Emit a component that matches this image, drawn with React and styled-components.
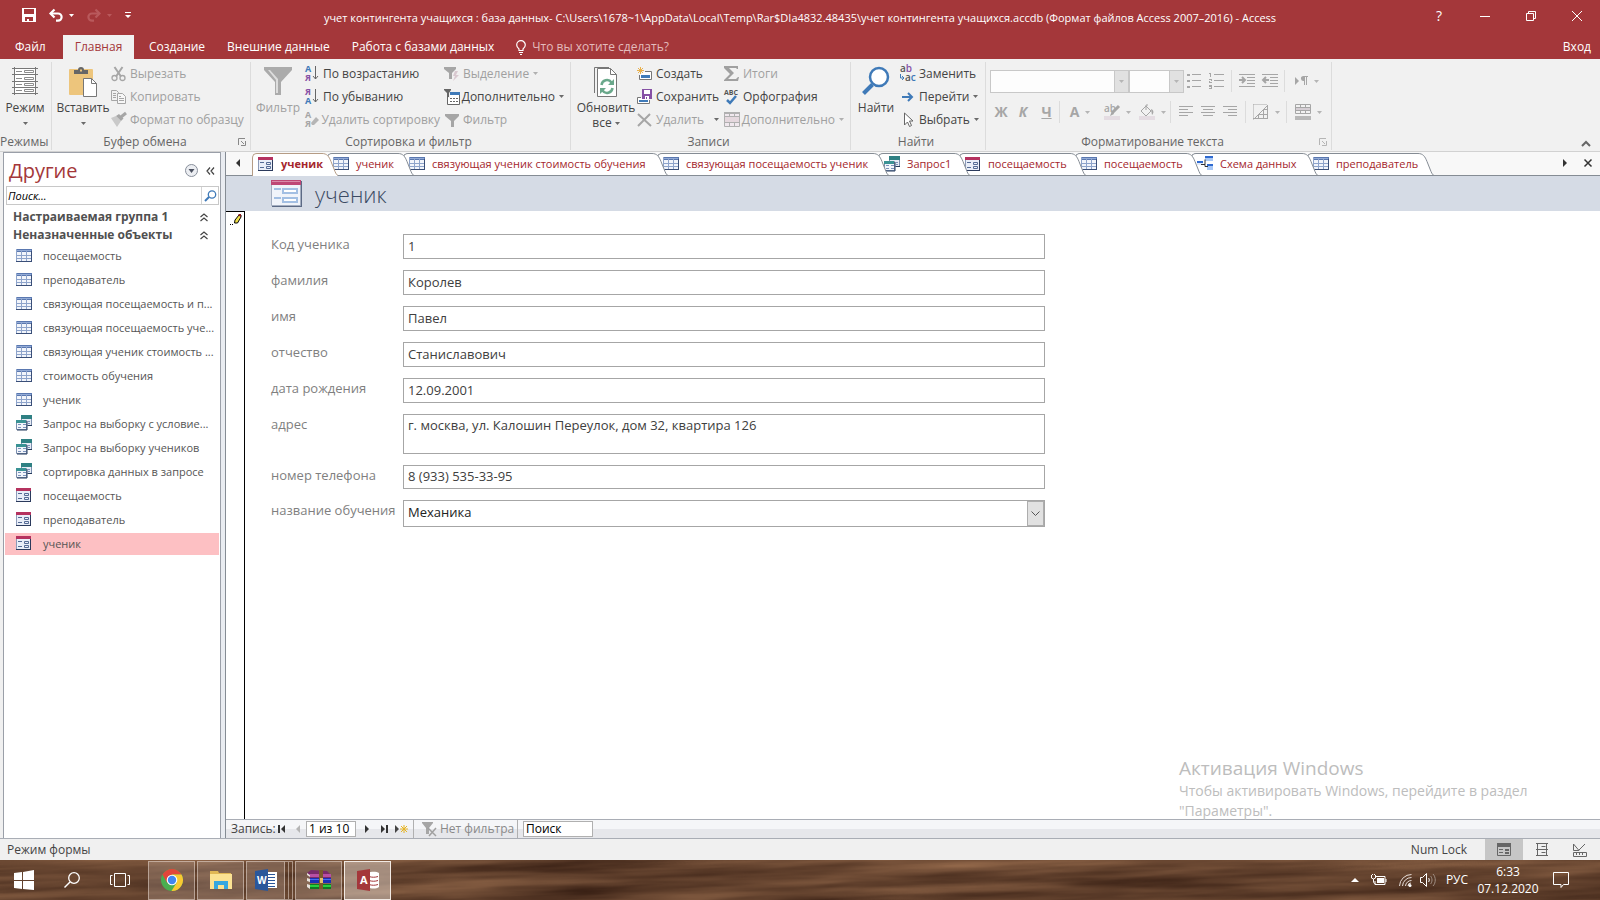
import React from 'react';
import styled, { createGlobalStyle } from 'styled-components';

const GlobalStyle = createGlobalStyle`
  * {
    box-sizing: border-box;
  }
  body {
    margin: 0;
    font-family: "Open Sans", "Noto Sans", sans-serif;
    font-size: 12px;
    line-height: 16px;
    color: #444;
  }
  button, input, select, textarea {
    font: inherit;
    color: inherit;
  }
  button {
    padding: 0;
    border: 0;
    background: none;
    white-space: nowrap;
  }
  svg {
    display: block;
    flex: none;
    overflow: visible;
  }
`

const BLUE = '#3f7ab8';
const PURPLE = '#8650a5';

// ICONS
const Svg = ({ w = 16, h = 16, children, ...rest }) => (
  <svg width={w} height={h} viewBox={`0 0 ${w} ${h}`} fill="none" aria-hidden="true" {...rest}>
    {children}
  </svg>
);

const Caret = ({ color = '#6a6a6a' }) => (
  <Svg w={5} h={3}><path d="M0 0h5L2.5 3z" fill={color} /></Svg>
);

const SaveIcon = () => (
  <Svg w={14} h={14}>
    <path fill="#fff" fillRule="evenodd" d="M0 0h14v14H0zM2 1v5h10V1zM3 9v4h2v-2h2v2h4V9z" />
  </Svg>
);

const UndoIcon = ({ flip, color = '#fff' }) => (
  <Svg w={14} h={13}>
    <g transform={flip ? 'translate(14 0) scale(-1 1)' : undefined}>
      <path d="M1.500 4.500H9a3.600 3.600 0 0 1 0 7.200H7" stroke={color} strokeWidth="2.200" />
      <path d="M5.500 .5 1.500 4.500l4 4" stroke={color} strokeWidth="2.200" />
    </g>
  </Svg>
);

const CustomizeIcon = () => (
  <Svg w={6} h={7}><path d="M0 0h6v1H0zM0 3h6L3 6z" fill="#fff" /></Svg>
);

const BulbIcon = () => (
  <Svg w={10} h={15}>
    <path d="M3 10.500V9C1.500 7.800.7 6.500.7 5a4.300 4.300 0 0 1 8.600 0c0 1.500-.8 2.800-2.300 4v1.500z" stroke="#fff" strokeWidth="1.200" />
    <path d="M3 12h4v1H3zM4 14h2v1H4z" fill="#fff" />
  </Svg>
);

const ViewIcon = () => (
  <Svg w={26} h={28}>
    <path fill="#fff" d="M2 1h22v26H2z" />
    <path stroke="#777" d="M2.500 0v28M23.500 0v28M0 1.500h26M0 7.500h26M0 14.500h26M0 20.500h26M0 26.500h26" />
    <path stroke="#8c8c8c" d="M12.500 3.500h9v2h-9zM12.500 10.500h9v2h-9zM12.500 16.500h9v2h-9zM12.500 22.500h9v2h-9zM4 4.500h6M4 11.500h6M4 17.500h6M4 23.500h6" />
  </Svg>
);

const PasteIcon = () => (
  <Svg w={28} h={30}>
    <rect y="2" width="24" height="26" rx="1" fill="#edc57c" />
    <path fill="#666" d="M5 7V3h4a3 3 0 0 1 6 0h4v4zm6-4.500v2h2v-2z" fillRule="evenodd" />
    <path d="M14.500 11.500h8l5 5v13h-13z" fill="#fff" stroke="#777" />
    <path d="M22.500 11.500v5h5" stroke="#777" />
  </Svg>
);

const CutIcon = () => (
  <Svg>
    <path d="m3.500 1 6.500 9.500M11.500 1 5 10.500" stroke="#a6a6a6" strokeWidth="2" />
    <circle cx="3.500" cy="12" r="2.500" stroke="#a6a6a6" strokeWidth="1.300" />
    <circle cx="11.500" cy="12" r="2.500" stroke="#a6a6a6" strokeWidth="1.300" />
  </Svg>
);

const CopyIcon = () => (
  <Svg>
    <path d="M7 11.500H.5v-10h5l2 2v1" stroke="#a6a6a6" />
    <path d="M6.500 4.500h5l3 3v7h-8z" fill="#f7f7f7" stroke="#a6a6a6" />
    <path d="M2 4.500h3M2 6.500h3M2 8.500h3M8 9.500h5M8 11.500h5M8 7.500h2" stroke="#a6a6a6" />
  </Svg>
);

const BrushIcon = () => (
  <Svg>
    <path d="m0 6 5-2 5 5-4 6z" fill="#c9c9c9" />
    <path d="m5 4 3-2 4.500 4.500L10 9z" fill="#a6a6a6" />
    <path d="M10 5 15 1" stroke="#a6a6a6" strokeWidth="3" />
  </Svg>
);

const LargeFunnel = () => (
  <Svg w={28} h={28}>
    <path fill="#ababab" d="M0 0h28v3L17 15v13h-6V15L0 3z" />
    <path fill="#ddd" d="M4 3h2l8 9v14h-2V13z" />
  </Svg>
);

const SortIcon = ({ top, bottom, topColor, bottomColor, children }) => (
  <Svg w={15} h={17}>
    <text x="1" y="7" fontSize="9" fontWeight="700" fill={topColor}>{top}</text>
    <text x="1" y="16" fontSize="9" fontWeight="700" fill={bottomColor}>{bottom}</text>
    {children || <path d="M11.500 1v13M9 11l2.500 3 2.500-3" stroke="#666" />}
  </Svg>
);

const Eraser = () => <path d="m7 12 5-6 3 3-5 5H8z" fill="#b5b5b5" />;

const FunnelBolt = () => (
  <Svg>
    <path fill="#a6a6a6" d="M0 1h12v2L8 7v6H5V7L0 3z" />
    <path fill="#d9c9d0" d="m11 5 3 0-2 4h3l-6 6 2-5H9z" />
  </Svg>
);

const FunnelTable = () => (
  <Svg>
    <path fill="#666" d="M0 0h7v1L5 4v4H3V4L0 1z" />
    <path d="M3.500 6.500v9h12v-12H8" stroke="#666" fill="none" />
    <path fill="#fff" d="M6 6h9v9H4V9h2z" />
    <path fill={BLUE} d="M6 3h10v3H6z" />
    <path stroke="#666" strokeDasharray="2 1" d="M6 9.500h8M6 12.500h8" />
  </Svg>
);

const Funnel = () => (
  <Svg><path fill="#a6a6a6" d="M1 2h14v2l-5 5v6H7V9L1 4z" /></Svg>
);

const RefreshIcon = () => (
  <Svg w={24} h={30}>
    <path d="M.5 26V.5H15" stroke="#777" />
    <path d="M3.500 1.500h13l6 6v22h-19z" fill="#fff" stroke="#777" />
    <path d="M16.500 1.500v6h6" stroke="#777" />
    <path d="M7.500 18a5.500 5.500 0 0 1 10-2.500M18.500 21a5.500 5.500 0 0 1-10 2.500" stroke="#6aa88b" strokeWidth="2.500" />
    <path d="M20 12v6h-6zM6 27v-6h6z" fill="#6aa88b" />
  </Svg>
);

const NewIcon = () => (
  <Svg w={15} h={14}>
    <path stroke="#e8b04c" d="M3.500 0v7M0 3.500h7M1 1l5 5M6 1 1 6" />
    <path d="M8 4.500h6.500v8H2.500V8" fill="#fff" stroke="#777" />
    <path fill={BLUE} d="M4 8h9v3H4z" />
  </Svg>
);

const SaveRecordIcon = () => (
  <Svg w={15} h={16}>
    <path d="M4 8.500H.5v6h12V11" stroke="#777" fill="#fff" />
    <path fill={BLUE} d="M2 11h9v2H2z" />
    <path fill={PURPLE} d="M5 0h10v10H5z" />
    <path fill="#fff" d="M7 1h6v4H7zM8 7h4v3H8z" />
    <path fill={PURPLE} d="M9 8h1v2H9z" />
  </Svg>
);

const DeleteIcon = () => (
  <Svg w={15} h={14}><path d="m1 1 13 12M13 1 1 13" stroke="#a6a6a6" strokeWidth="2" /></Svg>
);

const SigmaIcon = () => (
  <Svg w={15} h={15}><path fill="#a0a0a0" d="M0 0h14v3h-1l-1-1H5l5 5-6 6h8l2-2h1l-1 4H0v-1l6-6-6-6z" /></Svg>
);

const SpellIcon = () => (
  <Svg>
    <text x="0" y="6" fontSize="7" fontWeight="700" fill="#555">ABC</text>
    <path d="m3 11 3 3 6-7" stroke={BLUE} strokeWidth="2.500" />
  </Svg>
);

const MoreTableIcon = () => (
  <Svg w={16} h={15}>
    <path fill="#f0e8ee" stroke="#b0b0b0" d="M.5.5h15v14H.5zM.5 4.500h15M.5 10.500h15M5.500 0v15M10.500 0v15" />
    <path fill="#b0b0b0" d="M0 0h16v2H0z" />
    <path fill="#e5d8de" d="M1 5h14v5H1z" />
  </Svg>
);

const FindIcon = () => (
  <Svg w={28} h={28}>
    <path d="m1.500 26.500 9-9" stroke={BLUE} strokeWidth="4" />
    <circle cx="17" cy="10" r="9" fill="#fff" stroke={BLUE} strokeWidth="2.500" />
  </Svg>
);

const ReplaceIcon = () => (
  <Svg w={17} h={16}>
    <text x="0" y="6" fontSize="10" fontWeight="600" fill="#555">a<tspan fill={PURPLE}>b</tspan></text>
    <text x="5" y="15" fontSize="10" fontWeight="600" fill="#555">a<tspan fill={BLUE}>c</tspan></text>
    <path d="M.5 8v4H4M2 10l2 2-2 2" stroke={BLUE} />
  </Svg>
);

const GotoIcon = () => (
  <Svg w={16} h={12}><path d="M2 6h10M8 2l4 4-4 4" stroke={BLUE} strokeWidth="2" /></Svg>
);

const CursorIcon = () => (
  <Svg w={16} h={16}><path d="M4.500 1v12l3-3 2 4.500 2-1L9.500 9H13z" fill="#fff" stroke="#666" /></Svg>
);

const GRAY = '#a6a6a6';
const BulletsIcon = () => (
  <Svg><path d="M0 1h3v2H0zM0 7h3v2H0zM0 13h3v2H0zM5 1h9v1H5zM5 7h9v1H5zM5 13h9v1H5z" fill={GRAY} /></Svg>
);
const NumbersIcon = () => (
  <Svg>
    <path d="M0 0h2v4H1V1H0zM0 6h3v2H1v1h2v1H0V8h2V7H0zM0 12h3v4H0v-1h2v-1H0z" fill={GRAY} />
    <path d="M5 1h10v1H5zM5 7h10v1H5zM5 13h10v1H5z" fill={GRAY} />
  </Svg>
);
const IndentIcon = ({ back }) => (
  <Svg>
    <path d="M0 1.500h16M8 4.500h8M8 7.500h8M8 10.500h8M0 13.500h16" stroke={GRAY} />
    <path d={back ? 'M7 7H1m3-3L1 7l3 3' : 'M0 7h6M3 4l3 3-3 3'} stroke={GRAY} strokeWidth="2" />
  </Svg>
);
const ParagraphIcon = () => (
  <Svg w={13} h={10}>
    <path fill={GRAY} d="m0 1 4 4-4 4zM8 0h5v1h-1v8h-1V1h-1v8H9V5a2.500 2.500 0 0 1-1-5z" />
  </Svg>
);
const AlignIcon = ({ d }) => (
  <Svg w={14} h={12}><path d={d} stroke={GRAY} /></Svg>
);
const HighlightIcon = () => (
  <Svg>
    <path fill="#e4dce2" d="M0 12h16v4H0z" />
    <text x="0" y="8" fontSize="10" fontWeight="600" fill={GRAY}>ab</text>
    <path d="M15 2 8 9" stroke={GRAY} strokeWidth="3" />
    <path d="m8 7 2 3-4 2z" fill={GRAY} />
  </Svg>
);
const FillIcon = () => (
  <Svg>
    <path fill="#e4dce2" d="M0 12h16v4H0z" />
    <path d="m2 7 5-5 5 5-5 5zM7 6V1h2" stroke={GRAY} />
    <path d="M12 5c3 1 3 4 1 6z" fill={GRAY} />
  </Svg>
);
const GridlinesIcon = () => (
  <Svg>
    <path d="M.5.500h14M.5.500v15" stroke={GRAY} strokeDasharray="1 1" />
    <path d="M1 15 15 1M0 14.500h15M14.500 1v14M10.500 5v10M5.500 10v5M5 10.500h10M10 5.500h5" stroke={GRAY} />
  </Svg>
);
const AltRowIcon = () => (
  <Svg>
    <path d="M.5.500h15v9H.5zM.5 3.500h15M.5 6.500h15M5.500 0v10M10.500 0v10" stroke={GRAY} />
    <path fill="#d5ced4" d="M1 4h14v2H1z" />
    <path fill="#b8b8b8" d="M0 12h16v4H0z" />
  </Svg>
);
const LauncherIcon = ({ color = '#888' }) => (
  <Svg w={8} h={8}><path d="M.5 7V.500H7M3 3l3 3M7.500 3v4.500H3" stroke={color} /></Svg>
);

const TableIcon = () => (
  <Svg w={16} h={13}>
    <path fill="#f2f5fb" d="M0 0h16v13H0z" />
    <path fill="#5a78b0" d="M0 0h16v3H0z" />
    <path stroke="#8ea4cb" d="M.5 0v13M5.500 2v11M10.500 2v11M0 6.500h16M0 9.500h16" />
    <path stroke="#3a4f78" d="M15.500 2v11M0 12.500h16" />
    <path stroke="#93abd6" d="M1 1.500h14" />
  </Svg>
);

const QueryIcon = () => (
  <Svg w={16} h={16}>
    <path fill="#e6ebf5" stroke="#7b8ead" d="M5.500.5h10v10h-10z" />
    <path fill="#2f8083" d="M5 0h11v4H5z" />
    <path fill="#f2f5fb" stroke="#7b8ead" d="M.5 5.500h10v9H.5z" />
    <path fill="#3a9294" d="M0 5h10v3H0z" />
    <path stroke="#7b92bb" d="M2 9.500h3M7 9.500h3M2 12.500h3M7 12.500h3M12 6.500h2M12 8.500h2" />
    <path stroke="#253b5c" d="M1 15h10V6M12 10.500h4" />
  </Svg>
);

const FormIcon = () => (
  <Svg w={15} h={14}>
    <path fill="#e9eef8" stroke="#8c9ab8" d="M.5.5h14v13H.5z" />
    <path fill="#b5325f" d="M0 0h15v3H0z" />
    <path stroke="#556b95" d="M2 5.500h4M2 10.500h4M8.500 5.500h4v2h-4zM8.500 9.500h4v2h-4z" />
    <path stroke="#2b3a5c" d="M14.500 3v11M0 13.500h15" />
  </Svg>
);

const SchemaIcon = () => (
  <Svg>
    <path fill="#a9c8f5" d="M8 0h8v5H8zM10 9h6v5h-6z" />
    <path fill="#2f6ad0" d="M8 0h8v2H8zM10 8h6v2h-6zM0 5h6v2H0z" />
    <path fill="#dfe9f8" d="M0 7h6v2H0z" />
    <path stroke="#333" d="M4 8.500h4V3.500M8 8.500v2h3" />
  </Svg>
);

const BigFormIcon = () => (
  <Svg w={31} h={27}>
    <path fill="#5c6a85" d="M1 1h30v26H1z" />
    <path fill="#f1f4fa" stroke="#a4aec0" d="M.5.5h29v25H.5z" />
    <path fill="#bf4775" d="M0 0h30v5H0z" />
    <path fill="#d98aa8" d="M1 1h28v1H1z" />
    <path stroke="#a3bfe3" strokeWidth="2" d="M3 9h7M3 18h7" />
    <path stroke="#a3bfe3" strokeWidth="2" fill="#fff" d="M12 9h14v4H12zM12 18h14v4H12z" />
  </Svg>
);

const PencilIcon = () => (
  <Svg w={12} h={12}>
    <path d="m4.500 10 .5-3 4-5h2v2l-3.500 6z" fill="#f0e04a" stroke="#000" />
    <path d="m8 2 3 2V1H9z" fill="#8b1a1a" />
    <path d="M0 11h1v1H0zM2 11h1v1H2z" fill="#000" />
  </Svg>
);

const TabEdgeShape = ({ stroke }) => (
  <Svg w={18} h={23}>
    <path d="M0 0h2c5 0 7 3 9 8l4 10c1 3 2 4 3 5H0z" fill="#fff" />
    <path d="M0 .5h2c5 0 7 3 9 8l4 10c1 2.500 2 3.500 3 4" stroke={stroke} />
  </Svg>
);

const DoubleChevron = () => (
  <Svg w={8} h={9}><path d="m.5 4 3.500-3 3.500 3M.5 8 4 5l3.500 3" stroke="#444" strokeWidth="1.200" /></Svg>
);
const DoubleChevronLeft = () => (
  <Svg w={9} h={8}><path d="M4 .5 1 4l3 3.500M8 .5 5 4l3 3.500" stroke="#444" strokeWidth="1.200" /></Svg>
);
const RoundMenuIcon = () => (
  <Svg w={13} h={13}>
    <circle cx="6.500" cy="6.500" r="6" fill="#eceef2" stroke="#888f9b" />
    <path d="M3.500 5h6l-3 4z" fill="#4b5160" />
  </Svg>
);
const SmallSearch = () => (
  <Svg w={13} h={12}>
    <path d="m1 11 4-4" stroke={BLUE} strokeWidth="2" />
    <circle cx="8" cy="4.500" r="3.700" stroke={BLUE} strokeWidth="1.300" />
  </Svg>
);

const PATHS = {
  first: 'M0 0h2v8H0zM7 0v8L3 4z',
  prev: 'M4 0v8L0 4z',
  next: 'M0 0v8l4-4z',
  last: 'M5 0h2v8H5zM0 0v8l4-4z',
};
const NavArrow = ({ kind, color = '#333' }) => (
  <Svg w={kind === 'first' || kind === 'last' ? 7 : 5} h={8}><path d={PATHS[kind]} fill={color} /></Svg>
);
const NewRecordIcon = () => (
  <Svg w={13} h={8}>
    <path d="M0 0v8l4-4z" fill="#444" />
    <path d="M9 0v8M5 4h8M6 1l6 6M12 1 6 7" stroke="#e6b422" />
  </Svg>
);
const NoFilterIcon = () => (
  <Svg w={15} h={14}>
    <path fill={GRAY} d="M0 0h11v1L7 6v6H4V6L0 1z" />
    <path d="m6 6 8 8M14 6l-7 8" stroke="#a0a0a0" strokeWidth="1.500" />
  </Svg>
);

// WINDOW
const Window = styled.div`
  min-height: 100vh;
  display: flex;
  flex-direction: column;
  background: #f0f0f0;
`
const RedHeader = styled.header`
  background: #a4373a;
  color: #fff;
`
const TitleBar = styled.div`
  height: 35px;
  display: grid;
  grid-template-columns: 220px 1fr 220px;
  align-items: center;
`
const QuickAccess = styled.div`
  display: flex;
  align-items: center;
  padding: 0 0 5px 22px;
  gap: 13px;
`
const QuickButton = styled.button`
  display: flex;
  align-items: center;
  gap: 6px;
`
const WindowTitle = styled.div`
  font-size: 11px;
  text-align: center;
  white-space: nowrap;
`
const WindowButtons = styled.div`
  display: flex;
  justify-content: flex-end;
  padding: 0 0 4px;
`
const WindowButton = styled.button`
  width: 46px;
  height: 20px;
  display: grid;
  place-items: center;
  font-size: 14px;
`
const MenuTabs = styled.nav`
  height: 24px;
  display: flex;
  align-items: center;
  gap: 22px;
  padding: 0 9px 0 15px;
`
const MenuTab = styled.button`
  height: 24px;
  ${(p) => p.$active && `
    width: 71px;
    margin: 0 -7px 0 -9px;
    background: #f1f1f1;
    color: #a4373a;
  `}
`
const FileTab = styled(MenuTab)`
  width: 35px;
  text-align: left;
`
const TellMe = styled.label`
  display: flex;
  align-items: center;
  gap: 6px;
  flex: 1;
`
const TellMeInput = styled.input`
  flex: 1;
  border: 0;
  padding: 0;
  background: none;
  &::placeholder {
    color: #e3bcbd;
    opacity: 1;
  }
`

// RIBBON
const Ribbon = styled.section`
  display: flex;
  height: 93px;
  padding-top: 3px;
  background: #f1f1f1;
  border-bottom: 1px solid #d2d2d2;
`
const Group = styled.div`
  width: ${(p) => p.$width}px;
  height: 88px;
  display: flex;
  flex-direction: column;
  border-right: 1px solid #dcdcdc;
`
const GroupBody = styled.div`
  flex: 1;
  display: flex;
  padding-left: ${(p) => p.$pad || 0}px;
`
const GroupCaption = styled.div`
  height: 16px;
  display: flex;
  align-items: center;
  color: #666;
  padding-right: 4px;
  white-space: nowrap;
`
const CaptionText = styled.span`
  flex: 1;
  text-align: center;
`
const BigButton = styled.button`
  width: ${(p) => p.$width}px;
  display: flex;
  flex-direction: column;
  align-items: center;
  padding-top: 5px;
  color: ${(p) => (p.disabled ? '#a0a0a0' : '#444')};
`
const BigIcon = styled.span`
  height: 33px;
`
const BigCaret = styled.span`
  height: 14px;
  display: flex;
  align-items: center;
  gap: 3px;
`
const Stack = styled.div`
  width: ${(p) => p.$width}px;
  display: flex;
  flex-direction: column;
`
const SmallButton = styled.button`
  height: 23px;
  display: flex;
  align-items: center;
  color: ${(p) => (p.disabled ? '#a0a0a0' : '#444')};
`
const SmallIcon = styled.span`
  width: 19px;
`
const SmallText = styled.span`
  margin-right: ${(p) => p.$gap || 4}px;
`
const FormatBody = styled.div`
  flex: 1;
  display: flex;
  flex-direction: column;
  gap: 9px;
  padding: 8px 0 0 4px;
`
const FormatRow = styled.div`
  height: 22px;
  display: flex;
  align-items: center;
`
const FormatCell = styled.button`
  width: ${(p) => p.$width}px;
  display: flex;
  align-items: center;
  justify-content: center;
  gap: 6px;
  color: #a6a6a6;
  font-size: 14px;
  font-weight: 700;
  font-style: ${(p) => (p.$italic ? 'italic' : 'normal')};
  text-decoration: ${(p) => (p.$underline ? 'underline' : 'none')};
`
const Divider = styled.span`
  width: 1px;
  height: 22px;
  margin-left: ${(p) => p.$gap || 0}px;
  background: #dcdcdc;
`
const Combo = styled.span`
  width: ${(p) => p.$width}px;
  height: 23px;
  display: flex;
  border: 1px solid #c8c8c8;
  background: #fdfdfd;
`
const ComboSelect = styled.select`
  flex: 1;
  min-width: 0;
  appearance: none;
  border: 0;
  background: none;
`
const ComboArrow = styled.span`
  width: 14px;
  display: grid;
  place-items: center;
  background: #e1e1e1;
  border-left: 1px solid #c8c8c8;
`
const Collapse = styled.button`
  margin: auto 9px 4px auto;
`

// WORKSPACE
const Workspace = styled.main`
  flex: 1;
  display: flex;
  padding-left: 3px;
  border-bottom: 1px solid #a9adb5;
`
const Sidebar = styled.aside`
  width: 218px;
  flex: none;
  border: 1px solid #9a9fa8;
  border-bottom: 0;
  background: #fff;
`
const Splitter = styled.div`
  width: 5px;
  flex: none;
  background: #e9ecf1;
  border-right: 1px solid #858c94;
`
const SideHead = styled.div`
  height: 33px;
  display: flex;
  align-items: center;
  padding: 2px 5px 0;
  gap: 8px;
`
const SideTitle = styled.h2`
  flex: 1;
  margin: 0;
  font-size: 20px;
  line-height: 26px;
  font-weight: 400;
  color: #a4373a;
`
const SideSearch = styled.div`
  height: 19px;
  margin: 0 1px 0 2px;
  display: flex;
  align-items: center;
  border: 1px solid #c8c8c8;
`
const SideSearchInput = styled.input`
  flex: 1;
  min-width: 0;
  height: 17px;
  padding: 0 1px;
  border: 0;
  border-right: 1px solid #d4d4d4;
  font-size: 11px;
  font-style: italic;
  color: #000;
  &::placeholder {
    color: #000;
    opacity: 1;
  }
`
const SideSearchButton = styled.button`
  width: 16px;
  display: grid;
  place-items: center;
`
const GroupTitle = styled.button`
  width: 100%;
  height: 18px;
  padding: 0 12px 0 9px;
  display: flex;
  align-items: center;
  justify-content: space-between;
  font-weight: 700;
  color: #505050;
`
const SideGroups = styled.div`
  padding: 3px 0 0;
`
const ObjectList = styled.div`
  display: flex;
  flex-direction: column;
  gap: 2px;
  padding: 1px 1px;
`
const ObjectRow = styled.button`
  height: 22px;
  display: flex;
  align-items: center;
  padding: 0 1px 0 11px;
  font-size: 11px;
  color: #555;
  background: ${(p) => (p.$active ? '#fdc0c3' : 'none')};
`
const ObjectIcon = styled.span`
  width: 27px;
  flex: none;
  padding-bottom: 2px;
`
const Document = styled.section`
  flex: 1;
  min-width: 0;
  display: flex;
  flex-direction: column;
  background: #fff;
`

// DOCUMENT TABS
const DocTabs = styled.div`
  height: 24px;
  display: flex;
  padding-top: 1px;
  background: #f8f8f8;
  border-bottom: 1px solid #858c94;
`
const TabScroll = styled.button`
  width: 26px;
  padding: 0 2px 3px 0;
  display: grid;
  place-items: center;
`
const DocTab = styled.button`
  position: relative;
  z-index: ${(p) => p.$level};
  height: ${(p) => (p.$active ? 23 : 22)}px;
  display: flex;
  margin-right: -11px;
  overflow: hidden;
  font-size: 11px;
  color: #a4262c;
  font-weight: ${(p) => (p.$active ? 700 : 400)};
`
const DocTabBody = styled.span`
  position: relative;
  z-index: 1;
  width: ${(p) => p.$width}px;
  height: 23px;
  display: flex;
  align-items: center;
  gap: 7px;
  padding: 0 0 3px 5px;
  background: #fff;
  border: 1px solid ${(p) => (p.$active ? '#b59c85' : '#858c94')};
  border-width: 1px 0 0 1px;
  border-radius: 5px 0 0 0;
`
const DocTabIcon = styled.span`
  width: 16px;
  flex: none;
`
const TabsEnd = styled.div`
  flex: 1;
  display: flex;
  align-items: center;
  justify-content: flex-end;
  gap: 16px;
  padding: 0 8px 2px 0;
`

// FORM
const FormHeader = styled.div`
  height: 35px;
  display: flex;
  align-items: center;
  gap: 13px;
  padding-left: 45px;
  background: #d5dbe5;
`
const FormTitle = styled.h1`
  margin: 0;
  font-size: 22px;
  line-height: 28px;
  font-weight: 300;
  color: #3b4a63;
`
const FormArea = styled.div`
  flex: 1;
  display: flex;
`
const RecordSelector = styled.div`
  width: 19px;
  padding: 1px 0 0 4px;
  border-top: 1px solid #000;
  border-right: 1px solid #000;
`
const Fields = styled.form`
  flex: 1;
  max-width: 800px;
  display: flex;
  flex-direction: column;
  gap: 11px;
  padding: 23px 0 0 26px;
  font-size: 13px;
  line-height: 20px;
`
const Field = styled.div`
  display: flex;
  min-height: ${(p) => p.$height}px;
`
const FieldLabel = styled.label`
  width: 132px;
  flex: none;
  color: #7f7f7f;
`
const FieldInput = styled.input`
  flex: 1;
  min-width: 0;
  padding: 0 4px 2px;
  border: 1px solid #a6a6a6;
  background: #fff;
  color: #404040;
`
const FieldArea = styled(FieldInput)`
  resize: none;
  display: block;
`
const FieldCombo = styled.div`
  flex: 1;
  display: flex;
  border: 1px solid #a6a6a6;
`
const FieldSelect = styled.select`
  flex: 1;
  appearance: none;
  border: 0;
  padding: 0 4px 4px;
  background: #fff;
  color: #222;
`
const FieldArrow = styled.span`
  width: 17px;
  display: grid;
  place-items: center;
  background: #e1e1e1;
  border: 1px solid #adadad;
`
const RecordNav = styled.div`
  height: 19px;
  display: flex;
  align-items: center;
  padding-left: 5px;
  border-top: 1px solid #a9adb5;
  background: linear-gradient(#f5f6f8 50%, #e6e7eb 50%);
  white-space: nowrap;
`
const NavLabel = styled.label`
  width: 47px;
`
const NavButton = styled.button`
  width: ${(p) => p.$width}px;
`
const NavInput = styled.input`
  width: ${(p) => p.$width}px;
  height: 16px;
  padding: 0 2px;
  border: 1px solid #b0b0b0;
  background: #fff;
  color: #000;
  &::placeholder {
    color: #000;
    opacity: 1;
  }
`
const RecordInput = styled(NavInput)`
  margin-right: 9px;
`
const NavFilter = styled.button`
  width: 105px;
  height: 18px;
  display: flex;
  align-items: center;
  gap: 3px;
  margin-right: 5px;
  padding-left: 8px;
  border: solid #b0b0b0;
  border-width: 0 1px;
  color: #8a8a8a;
`

// STATUS BAR
const StatusBar = styled.footer`
  height: 21px;
  display: flex;
  align-items: center;
  padding: 0 1px 0 7px;
`
const StatusText = styled.span`
  flex: 1;
`
const StatusLock = styled.span`
  margin-right: 18px;
`
const ViewButton = styled.button`
  width: 38px;
  height: 21px;
  display: grid;
  place-items: center;
  background: ${(p) => (p.$active ? '#c6c6c6' : 'none')};
`
const Watermark = styled.div`
  position: absolute;
  right: 67px;
  bottom: 79px;
  width: 354px;
  font-size: 14px;
  line-height: 20px;
  white-space: nowrap;
  color: #bdbdbd;
  pointer-events: none;
`
const WatermarkTitle = styled.div`
  font-size: 19px;
  line-height: 26px;
`

// TASKBAR
const Taskbar = styled.div`
  position: relative;
  height: 40px;
  display: flex;
  align-items: center;
  background: #5d402d;
  color: #fff;
  overflow: hidden;
`
const Wood = styled.svg`
  position: absolute;
  inset: 0;
  width: 100%;
  height: 100%;
`
const TaskItems = styled.div`
  position: relative;
  flex: 1;
  display: flex;
  align-items: center;
`
const TaskPlain = styled.button`
  width: 48px;
  height: 40px;
  display: grid;
  place-items: center;
`
const TaskApps = styled.div`
  display: flex;
  align-items: center;
  margin-left: 4px;
`
const TaskApp = styled.button`
  width: ${(p) => p.$width || 47}px;
  height: 39px;
  margin-right: ${(p) => (p.$width ? 0 : 2)}px;
  display: grid;
  place-items: center;
  border: 1px solid ${(p) => (p.$active ? '#f1e9e3' : 'rgba(230, 215, 205, .55)')};
  background: ${(p) => (p.$active ? 'rgba(230, 215, 205, .5)' : 'rgba(230, 215, 205, .22)')};
`
const TaskStack = styled.span`
  width: 4px;
  height: 39px;
  border: 1px solid rgba(230, 215, 205, .55);
  border-left: 0;
  &:last-of-type {
    margin-right: 2px;
  }
`
const Tray = styled.div`
  position: relative;
  display: flex;
  align-items: center;
`
const TrayItem = styled.button`
  width: ${(p) => p.$width}px;
  display: grid;
  place-items: center;
`
const Clock = styled.div`
  width: 66px;
  text-align: center;
  line-height: 17px;
`

const objects = [
  ['table', 'посещаемость'],
  ['table', 'преподаватель'],
  ['table', 'связующая посещаемость и п...'],
  ['table', 'связующая посещаемость уче...'],
  ['table', 'связующая ученик стоимость ...'],
  ['table', 'стоимость обучения'],
  ['table', 'ученик'],
  ['query', 'Запрос на выборку с условие...'],
  ['query', 'Запрос на выборку учеников'],
  ['query', 'сортировка данных в запросе'],
  ['form', 'посещаемость'],
  ['form', 'преподаватель'],
  ['form', 'ученик'],
];

const docTabs = [
  ['form', 'ученик', 68],
  ['table', 'ученик', 69],
  ['table', 'связующая ученик стоимость обучения', 247],
  ['table', 'связующая посещаемость ученик', 214],
  ['query', 'Запрос1', 74],
  ['form', 'посещаемость', 109],
  ['table', 'посещаемость', 109],
  ['schema', 'Схема данных', 109],
  ['table', 'преподаватель', 109],
];

const fields = [
  ['code', 'Код ученика', '1', 25],
  ['surname', 'фамилия', 'Королев', 25],
  ['name', 'имя', 'Павел', 25],
  ['patronymic', 'отчество', 'Станиславович', 25],
  ['birth', 'дата рождения', '12.09.2001', 25],
  ['address', 'адрес', 'г. москва, ул. Калошин Переулок, дом 32, квартира 126', 40],
  ['phone', 'номер телефона', '8 (933) 535-33-95', 23],
];

const icons = { table: TableIcon, query: QueryIcon, form: FormIcon, schema: SchemaIcon };
const ObjectGlyph = ({ type }) => React.createElement(icons[type]);

const RibbonItem = ({ icon, text, disabled, caret, gap }) => (
  <SmallButton disabled={disabled}>
    <SmallIcon>{icon}</SmallIcon>
    <SmallText $gap={gap}>{text}</SmallText>
    {caret && <Caret color={disabled && !gap ? '#b0b0b0' : undefined} />}
  </SmallButton>
);

const Header = () => (
  <RedHeader>
    <TitleBar>
      <QuickAccess>
        <QuickButton aria-label="Сохранить"><SaveIcon /></QuickButton>
        <QuickButton aria-label="Отменить"><UndoIcon /><Caret color="#fff" /></QuickButton>
        <QuickButton aria-label="Вернуть" disabled><UndoIcon flip color="#b9595c" /><Caret color="#b9595c" /></QuickButton>
        <QuickButton aria-label="Настройка панели"><CustomizeIcon /></QuickButton>
      </QuickAccess>
      <WindowTitle>
        учет контингента учащихся : база данных- C:\Users\1678~1\AppData\Local\Temp\Rar$DIa4832.48435\учет контингента учащихся.accdb (Формат файлов Access 2007–2016) - Access
      </WindowTitle>
      <WindowButtons>
        <WindowButton>?</WindowButton>
        <WindowButton aria-label="Свернуть"><Svg w={10} h={10}><path d="M0 5.500h10" stroke="#fff" /></Svg></WindowButton>
        <WindowButton aria-label="Восстановить"><Svg w={10} h={10}><path d="M.5 2.500h7v7h-7zM2.500 2.500v-2h7v7h-2" stroke="#fff" /></Svg></WindowButton>
        <WindowButton aria-label="Закрыть"><Svg w={10} h={10}><path d="m0 0 10 10M10 0 0 10" stroke="#fff" /></Svg></WindowButton>
      </WindowButtons>
    </TitleBar>
    <MenuTabs>
      <FileTab>Файл</FileTab>
      <MenuTab $active>Главная</MenuTab>
      <MenuTab>Создание</MenuTab>
      <MenuTab>Внешние данные</MenuTab>
      <MenuTab>Работа с базами данных</MenuTab>
      <TellMe>
        <BulbIcon />
        <TellMeInput aria-label="Помощник" placeholder="Что вы хотите сделать?" />
      </TellMe>
      <MenuTab>Вход</MenuTab>
    </MenuTabs>
  </RedHeader>
);

const RibbonBar = () => (
  <Ribbon>
    <Group $width={52}>
      <GroupBody>
        <BigButton $width={50}>
          <BigIcon><ViewIcon /></BigIcon>
          Режим
          <BigCaret><Caret /></BigCaret>
        </BigButton>
      </GroupBody>
      <GroupCaption><CaptionText>Режимы</CaptionText></GroupCaption>
    </Group>
    <Group $width={199}>
      <GroupBody $pad={3}>
        <BigButton $width={56}>
          <BigIcon><PasteIcon /></BigIcon>
          Вставить
          <BigCaret><Caret /></BigCaret>
        </BigButton>
        <Stack $width={138}>
          <RibbonItem icon={<CutIcon />} text="Вырезать" disabled />
          <RibbonItem icon={<CopyIcon />} text="Копировать" disabled />
          <RibbonItem icon={<BrushIcon />} text="Формат по образцу" disabled />
        </Stack>
      </GroupBody>
      <GroupCaption><CaptionText>Буфер обмена</CaptionText><LauncherIcon /></GroupCaption>
    </Group>
    <Group $width={320}>
      <GroupBody $pad={1}>
        <BigButton $width={52} disabled>
          <BigIcon><LargeFunnel /></BigIcon>
          Фильтр
        </BigButton>
        <Stack $width={140}>
          <RibbonItem icon={<SortIcon top="А" bottom="Я" topColor={BLUE} bottomColor={PURPLE} />} text="По возрастанию" />
          <RibbonItem icon={<SortIcon top="Я" bottom="А" topColor={PURPLE} bottomColor={BLUE} />} text="По убыванию" />
          <RibbonItem icon={<SortIcon top="А" bottom="Я" topColor={GRAY} bottomColor={GRAY}><Eraser /></SortIcon>} text="Удалить сортировку" disabled />
        </Stack>
        <Stack $width={120}>
          <RibbonItem icon={<FunnelBolt />} text="Выделение" disabled caret />
          <RibbonItem icon={<FunnelTable />} text="Дополнительно" caret />
          <RibbonItem icon={<Funnel />} text="Фильтр" disabled />
        </Stack>
      </GroupBody>
      <GroupCaption><CaptionText>Сортировка и фильтр</CaptionText></GroupCaption>
    </Group>
    <Group $width={280}>
      <GroupBody $pad={4}>
        <BigButton $width={62}>
          <BigIcon><RefreshIcon /></BigIcon>
          Обновить
          <BigCaret>все <Caret /></BigCaret>
        </BigButton>
        <Stack $width={87}>
          <RibbonItem icon={<NewIcon />} text="Создать" />
          <RibbonItem icon={<SaveRecordIcon />} text="Сохранить" />
          <RibbonItem icon={<DeleteIcon />} text="Удалить" disabled caret gap={10} />
        </Stack>
        <Stack $width={120}>
          <RibbonItem icon={<SigmaIcon />} text="Итоги" disabled />
          <RibbonItem icon={<SpellIcon />} text="Орфография" />
          <RibbonItem icon={<MoreTableIcon />} text="Дополнительно" disabled caret />
        </Stack>
      </GroupBody>
      <GroupCaption><CaptionText>Записи</CaptionText></GroupCaption>
    </Group>
    <Group $width={135}>
      <GroupBody $pad={1}>
        <BigButton $width={48}>
          <BigIcon><FindIcon /></BigIcon>
          Найти
        </BigButton>
        <Stack $width={84}>
          <RibbonItem icon={<ReplaceIcon />} text="Заменить" />
          <RibbonItem icon={<GotoIcon />} text="Перейти" caret />
          <RibbonItem icon={<CursorIcon />} text="Выбрать" caret />
        </Stack>
      </GroupBody>
      <GroupCaption><CaptionText>Найти</CaptionText></GroupCaption>
    </Group>
    <Group $width={346}>
      <FormatBody>
        <FormatRow>
          <Combo $width={139}>
            <ComboSelect aria-label="Шрифт" disabled />
            <ComboArrow><Caret color="#b5b5b5" /></ComboArrow>
          </Combo>
          <Combo $width={55}>
            <ComboSelect aria-label="Размер" disabled />
            <ComboArrow><Caret color="#b5b5b5" /></ComboArrow>
          </Combo>
          <FormatCell $width={22} aria-label="Маркеры"><BulletsIcon /></FormatCell>
          <FormatCell $width={22} aria-label="Нумерация"><NumbersIcon /></FormatCell>
          <Divider $gap={3} />
          <FormatCell $width={30} aria-label="Увеличить отступ"><IndentIcon /></FormatCell>
          <FormatCell $width={16} aria-label="Уменьшить отступ"><IndentIcon back /></FormatCell>
          <Divider $gap={6} />
          <FormatCell $width={44} aria-label="Направление текста"><ParagraphIcon /><Caret color="#b5b5b5" /></FormatCell>
        </FormatRow>
        <FormatRow>
          <FormatCell $width={22}>Ж</FormatCell>
          <FormatCell $width={22} $italic>К</FormatCell>
          <FormatCell $width={25} $underline>Ч</FormatCell>
          <Divider />
          <FormatCell $width={40}>А<Caret color="#b5b5b5" /></FormatCell>
          <FormatCell $width={35} aria-label="Выделение цветом"><HighlightIcon /><Caret color="#b5b5b5" /></FormatCell>
          <FormatCell $width={35} aria-label="Заливка"><FillIcon /><Caret color="#b5b5b5" /></FormatCell>
          <Divider />
          <FormatCell $width={30} aria-label="По левому краю"><AlignIcon d="M0 .5h14M0 3.500h9M0 6.500h14M0 9.500h9" /></FormatCell>
          <FormatCell $width={14} aria-label="По центру"><AlignIcon d="M0 .5h14M2 3.500h10M0 6.500h14M2 9.500h10" /></FormatCell>
          <FormatCell $width={30} aria-label="По правому краю"><AlignIcon d="M0 .5h14M5 3.500h9M0 6.500h14M5 9.500h9" /></FormatCell>
          <Divider />
          <FormatCell $width={40} aria-label="Сетка"><GridlinesIcon /><Caret color="#b5b5b5" /></FormatCell>
          <Divider />
          <FormatCell $width={42} aria-label="Цвет чередования"><AltRowIcon /><Caret color="#b5b5b5" /></FormatCell>
        </FormatRow>
      </FormatBody>
      <GroupCaption><CaptionText>Форматирование текста</CaptionText><LauncherIcon color="#b5b5b5" /></GroupCaption>
    </Group>
    <Collapse aria-label="Свернуть ленту">
      <Svg w={10} h={6}><path d="m1 5 4-4 4 4" stroke="#666" strokeWidth="2" /></Svg>
    </Collapse>
  </Ribbon>
);

const NavigationPane = () => (
  <Sidebar>
    <SideHead>
      <SideTitle>Другие</SideTitle>
      <button aria-label="Категории"><RoundMenuIcon /></button>
      <button aria-label="Свернуть область"><DoubleChevronLeft /></button>
    </SideHead>
    <SideSearch>
      <SideSearchInput aria-label="Поиск объектов" placeholder="Поиск..." />
      <SideSearchButton aria-label="Найти объект"><SmallSearch /></SideSearchButton>
    </SideSearch>
    <SideGroups>
      <GroupTitle>Настраиваемая группа 1<DoubleChevron /></GroupTitle>
      <GroupTitle>Неназначенные объекты<DoubleChevron /></GroupTitle>
    </SideGroups>
    <ObjectList>
      {objects.map(([type, name], i) => (
        <ObjectRow key={type + name} $active={i === objects.length - 1}>
          <ObjectIcon><ObjectGlyph type={type} /></ObjectIcon>
          {name}
        </ObjectRow>
      ))}
    </ObjectList>
  </Sidebar>
);

const StudentForm = () => (
  <Document>
    <DocTabs>
      <TabScroll aria-label="Назад"><NavArrow kind="prev" /></TabScroll>
      {docTabs.map(([type, name, width], i) => (
        <DocTab key={type + name} $active={i === 0} $level={docTabs.length - i}>
          <DocTabBody $width={width} $active={i === 0}>
            <DocTabIcon><ObjectGlyph type={type} /></DocTabIcon>
            {name}
          </DocTabBody>
          <TabEdgeShape stroke={i === 0 ? '#b59c85' : '#858c94'} />
        </DocTab>
      ))}
      <TabsEnd>
        <button aria-label="Вперед"><NavArrow kind="next" /></button>
        <button aria-label="Закрыть форму"><Svg w={8} h={8}><path d="m.5.500 7 7M7.500.500l-7 7" stroke="#333" strokeWidth="1.500" /></Svg></button>
      </TabsEnd>
    </DocTabs>
    <FormHeader>
      <BigFormIcon />
      <FormTitle>ученик</FormTitle>
    </FormHeader>
    <FormArea>
      <RecordSelector><PencilIcon /></RecordSelector>
      <Fields>
        {fields.map(([id, label, value, height]) => (
          <Field key={id} $height={height}>
            <FieldLabel htmlFor={id}>{label}</FieldLabel>
            {id === 'address'
              ? <FieldArea as="textarea" id={id} rows={1} defaultValue={value} />
              : <FieldInput id={id} defaultValue={value} />}
          </Field>
        ))}
        <Field $height={27}>
          <FieldLabel htmlFor="course">название обучения</FieldLabel>
          <FieldCombo>
            <FieldSelect id="course"><option>Механика</option></FieldSelect>
            <FieldArrow><Svg w={9} h={5}><path d="m.5.500 4 4 4-4" stroke="#555" /></Svg></FieldArrow>
          </FieldCombo>
        </Field>
      </Fields>
    </FormArea>
    <RecordNav>
      <NavLabel htmlFor="record">Запись:</NavLabel>
      <NavButton $width={18} aria-label="Первая запись"><NavArrow kind="first" /></NavButton>
      <NavButton $width={10} aria-label="Предыдущая запись"><NavArrow kind="prev" color="#b5b5b5" /></NavButton>
      <RecordInput id="record" $width={50} defaultValue="1 из 10" />
      <NavButton $width={16} aria-label="Следующая запись"><NavArrow kind="next" /></NavButton>
      <NavButton $width={14} aria-label="Последняя запись"><NavArrow kind="last" /></NavButton>
      <NavButton $width={18} aria-label="Новая запись"><NewRecordIcon /></NavButton>
      <NavFilter><NoFilterIcon />Нет фильтра</NavFilter>
      <NavInput $width={70} aria-label="Поиск" placeholder="Поиск" />
    </RecordNav>
  </Document>
);

const TaskbarPanel = () => (
  <Taskbar>
    <Wood aria-hidden="true">
      <defs>
        <filter id="grain" x="0" y="0" width="100%" height="100%" colorInterpolationFilters="sRGB">
          <feTurbulence type="fractalNoise" baseFrequency="0.004 0.06" numOctaves="4" seed="8" />
          <feColorMatrix values="0.5 0 0 0 0.14  0.4 0 0 0 0.06  0.3 0 0 0 0.03  0 0 0 0 1" />
        </filter>
      </defs>
      <rect x="-2%" y="-80" width="104%" height="200" filter="url(#grain)" transform="rotate(-2)" />
    </Wood>
    <TaskItems>
      <TaskPlain aria-label="Пуск">
        <Svg w={20} h={20}><path fill="#fff" d="m0 3 8-1v8H0zM9 2l11-2v10H9zM0 11h8v8l-8-1zM9 11h11v9L9 19z" /></Svg>
      </TaskPlain>
      <TaskPlain aria-label="Поиск Windows">
        <Svg w={16} h={16}><circle cx="10" cy="6" r="5.300" stroke="#fff" strokeWidth="1.300" /><path d="M6 10 .5 15.500" stroke="#fff" strokeWidth="1.500" /></Svg>
      </TaskPlain>
      <TaskPlain aria-label="Представление задач">
        <Svg w={20} h={14}><path d="M4.500.5h11v13h-11zM2.500 2.500h-2v9h2M17.500 2.500h2v9h-2" stroke="#fff" /></Svg>
      </TaskPlain>
      <TaskApps>
        <TaskApp aria-label="Chrome">
          <Svg w={22} h={22}>
            <circle cx="11" cy="11" r="11" fill="#4aae50" />
            <path fill="#e2453a" d="M1.500 5.500A11 11 0 0 1 20.500 5.500H11L6.200 14z" />
            <path fill="#f9c932" d="M20.500 5.500A11 11 0 0 1 10.500 22L15.800 13.500 11 5.500z" />
            <circle cx="11" cy="11" r="5.300" fill="#fff" />
            <circle cx="11" cy="11" r="4.200" fill="#4286f0" />
          </Svg>
        </TaskApp>
        <TaskApp aria-label="Проводник">
          <Svg w={22} h={18}>
            <path fill="#e0b755" d="M0 0h8l1 2h12v3H0z" />
            <path fill="#fbe293" d="M0 3h22v15H0z" />
            <path fill="#35a7e0" d="M4 10h14v8h-4v-4H8v4H4z" />
          </Svg>
        </TaskApp>
        <TaskApp $width={39} aria-label="Word">
          <Svg w={22} h={22}>
            <path fill="#fff" d="M12 3h10v16H12z" />
            <path stroke="#2b579a" d="M13 5.500h7M13 8.500h7M13 11.500h7M13 14.500h7M13 17.500h7" />
            <path fill="#2b579a" d="m0 2 13-2v22L0 20z" />
            <text x="2" y="15" fontSize="10" fontWeight="700" fill="#fff">W</text>
          </Svg>
        </TaskApp>
        <TaskStack /><TaskStack />
        <TaskApp aria-label="WinRAR">
          <Svg w={24} h={20}>
            <path fill="#7a2a6b" d="m4 0 16 1 4 4v3H3L0 3z" />
            <path fill="#b84fa3" d="M3 4h21v3H3z" />
            <path fill="#1b2fb5" d="M3 8h21v5H3z" />
            <path fill="#4a6cf0" d="M3 9h21v1H3z" />
            <path fill="#0f7a22" d="M3 14h21v5H3z" />
            <path fill="#27d03e" d="M3 15h21v2H3z" />
            <path fill="#e8e2dc" d="m0 3 3 2v2L0 5zM0 8l3 1v3L0 11zM0 14l3 1v4l-3-2z" />
            <path fill="#7a5a2c" d="M12 0h4v19h-4z" />
            <path fill="#e6c06a" d="M13 8h3v5h-3z" />
          </Svg>
        </TaskApp>
        <TaskApp $active aria-label="Access">
          <Svg w={22} h={22}>
            <path fill="#fff" d="M11 4c4-2 9-1 11 0v14c-3 2-8 2-11 0z" />
            <path stroke="#a4373a" d="M12 7.500c3 1 6 1 9 0M12 11.500c3 1 6 1 9 0M12 15.500c3 1 6 1 9 0" />
            <path fill="#a4373a" d="m0 2 13-2v22L0 20z" />
            <text x="3" y="15" fontSize="11" fontWeight="700" fill="#fff">A</text>
          </Svg>
        </TaskApp>
      </TaskApps>
    </TaskItems>
    <Tray>
      <TrayItem $width={20} aria-label="Скрытые значки"><Svg w={8} h={4}><path d="M4 0 8 4H0z" fill="#fff" /></Svg></TrayItem>
      <TrayItem $width={28} aria-label="Батарея">
        <Svg w={16} h={12}><path d="M5 2.500h9v8H4V7M15 5v3M.5 1v3l2 1 2-1V1M2.500 5v2c0 2 1 3 2 3M1.500 0v1M3.500 0v1" stroke="#fff" /><path d="M6 4h7v5H6z" fill="#fff" /></Svg>
      </TrayItem>
      <TrayItem $width={24} aria-label="Сеть">
        <Svg w={13} h={13}><path d="M.5 12A12 12 0 0 1 12.500 .5M3.500 12a9 9 0 0 1 9-8.500M6.500 12a6 6 0 0 1 6-5.500M9 12a3 3 0 0 1 3-3" stroke="#e6ddd8" /><circle cx="11" cy="11.500" r="1.500" fill="#fff" /></Svg>
      </TrayItem>
      <TrayItem $width={22} aria-label="Громкость">
        <Svg w={16} h={14}><path d="M.5 4.500h2l4-4v13l-4-4h-2zM8.500 5c1 1 1 3 0 4" stroke="#fff" /><path d="M10.500 3c2 2 2 6 0 8M13 1c3 3 3 9 0 12" stroke="#a08f84" /></Svg>
      </TrayItem>
      <TrayItem $width={36}>РУС</TrayItem>
      <Clock>6:33<br />07.12.2020</Clock>
      <TrayItem $width={40} aria-label="Уведомления">
        <Svg w={16} h={16}><path d="M.5.500h15v12h-5l-2.500 3v-3H.5z" stroke="#fff" /></Svg>
      </TrayItem>
      <TrayItem $width={19} aria-label="Свернуть все окна" />
    </Tray>
  </Taskbar>
);

const App = () => (
  <>
    <GlobalStyle />
    <Window>
      <Header />
      <RibbonBar />
      <Workspace>
        <NavigationPane />
        <Splitter />
        <StudentForm />
      </Workspace>
      <StatusBar>
        <StatusText>Режим формы</StatusText>
        <StatusLock>Num Lock</StatusLock>
        <ViewButton $active aria-label="Режим формы">
          <Svg w={14} h={13}><path d="M.5.500h13v12H.5z" stroke="#666" /><path d="M0 0h14v4H0zM2 6h4v1H2zM2 9h4v1H2zM8 6h4v2H8zM8 9h4v2H8z" fill="#666" /></Svg>
        </ViewButton>
        <ViewButton aria-label="Режим макета">
          <Svg w={12} h={13}><path d="M1.500 0v13M10.500 0v13M0 .5h12M0 6.500h12M0 12.500h12M5.500 3.500h4M5.500 9.500h4" stroke="#666" /></Svg>
        </ViewButton>
        <ViewButton aria-label="Конструктор">
          <Svg w={14} h={14}><path d="M.5 1v6.500H6zM.5 9.500h13v4H.5zM3.500 10v2M6.500 10v2M9.500 10v2M12 1 6 7" stroke="#666" /></Svg>
        </ViewButton>
      </StatusBar>
      <TaskbarPanel />
      <Watermark>
        <WatermarkTitle>Активация Windows</WatermarkTitle>
        Чтобы активировать Windows, перейдите в раздел<br />"Параметры".
      </Watermark>
    </Window>
  </>
);

export default App;
